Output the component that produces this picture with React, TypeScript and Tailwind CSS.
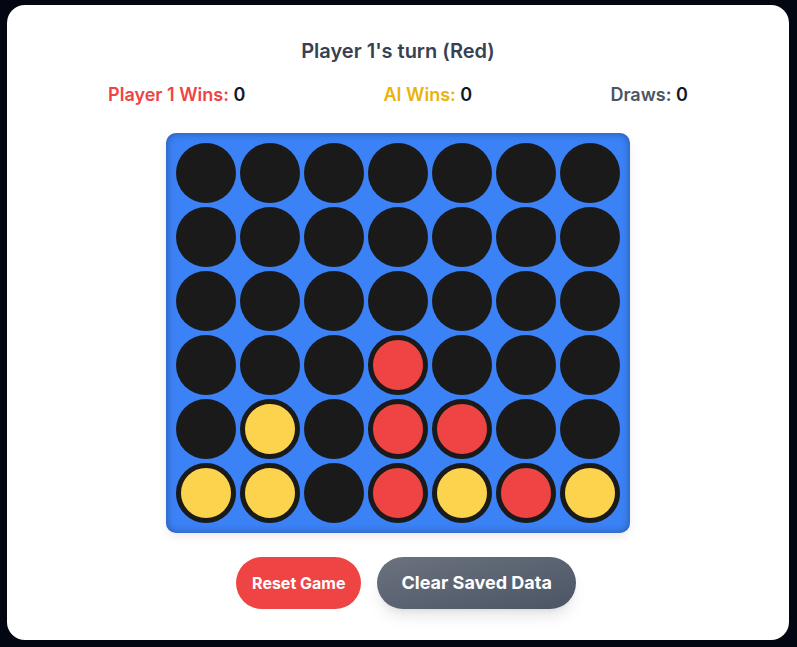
import React from 'react'

type Cell = 0 | 1 | 2

// 0 = empty, 1 = red (player), 2 = yellow (AI)
const board: Cell[][] = [
  [0, 0, 0, 0, 0, 0, 0],
  [0, 0, 0, 0, 0, 0, 0],
  [0, 0, 0, 0, 0, 0, 0],
  [0, 0, 0, 1, 0, 0, 0],
  [0, 2, 0, 1, 1, 0, 0],
  [2, 2, 0, 1, 2, 1, 2],
]

function Disc({ value }: { value: Cell }) {
  if (value === 1) {
    return <div className="w-[60px] h-[60px] rounded-full bg-[#ef4444] border-[5px] border-[#1a1a1a]" />
  }
  if (value === 2) {
    return <div className="w-[60px] h-[60px] rounded-full bg-[#fcd34d] border-[5px] border-[#1a1a1a]" />
  }
  return <div className="w-[60px] h-[60px] rounded-full bg-[#1a1a1a]" />
}

export default function App() {
  return (
    <div className="min-h-screen bg-[#030712] pl-[7px] pt-[5px] font-['Inter',sans-serif]">
      <div className="w-[782px] h-[635px] bg-white rounded-[18px] p-8 flex flex-col items-center">
        <h2 className="text-xl font-semibold text-[#374151] mb-4">Player 1's turn (Red)</h2>

        <div className="w-full flex justify-around text-lg font-semibold mb-6">
          <div>
            <span className="text-[#ef4444]">Player 1 Wins:</span> <span className="text-[#111827]">0</span>
          </div>
          <div>
            <span className="text-[#eab308]">AI Wins:</span> <span className="text-[#111827]">0</span>
          </div>
          <div>
            <span className="text-[#4b5563]">Draws:</span> <span className="text-[#111827]">0</span>
          </div>
        </div>

        {/* Board */}
        <div className="bg-[#3b82f6] rounded-[10px] p-[10px] grid grid-cols-7 gap-[4px] shadow-[inset_0_0_8px_rgba(0,0,0,0.35),0_4px_8px_rgba(0,0,0,0.08)] mb-6">
          {board.flat().map((c, i) => (
            <Disc key={i} value={c} />
          ))}
        </div>

        <div className="flex">
          <button className="ml-4 px-4 py-3 rounded-full bg-[#ef4444] text-white font-bold text-base">
            Reset Game
          </button>
          <button className="ml-4 px-6 py-3 rounded-full bg-gradient-to-br from-[#6b7280] to-[#4b5563] text-white font-bold text-lg shadow-[0_10px_15px_-3px_rgba(0,0,0,0.1),0_4px_6px_-4px_rgba(0,0,0,0.1)]">
            Clear Saved Data
          </button>
        </div>
      </div>
    </div>
  )
}
